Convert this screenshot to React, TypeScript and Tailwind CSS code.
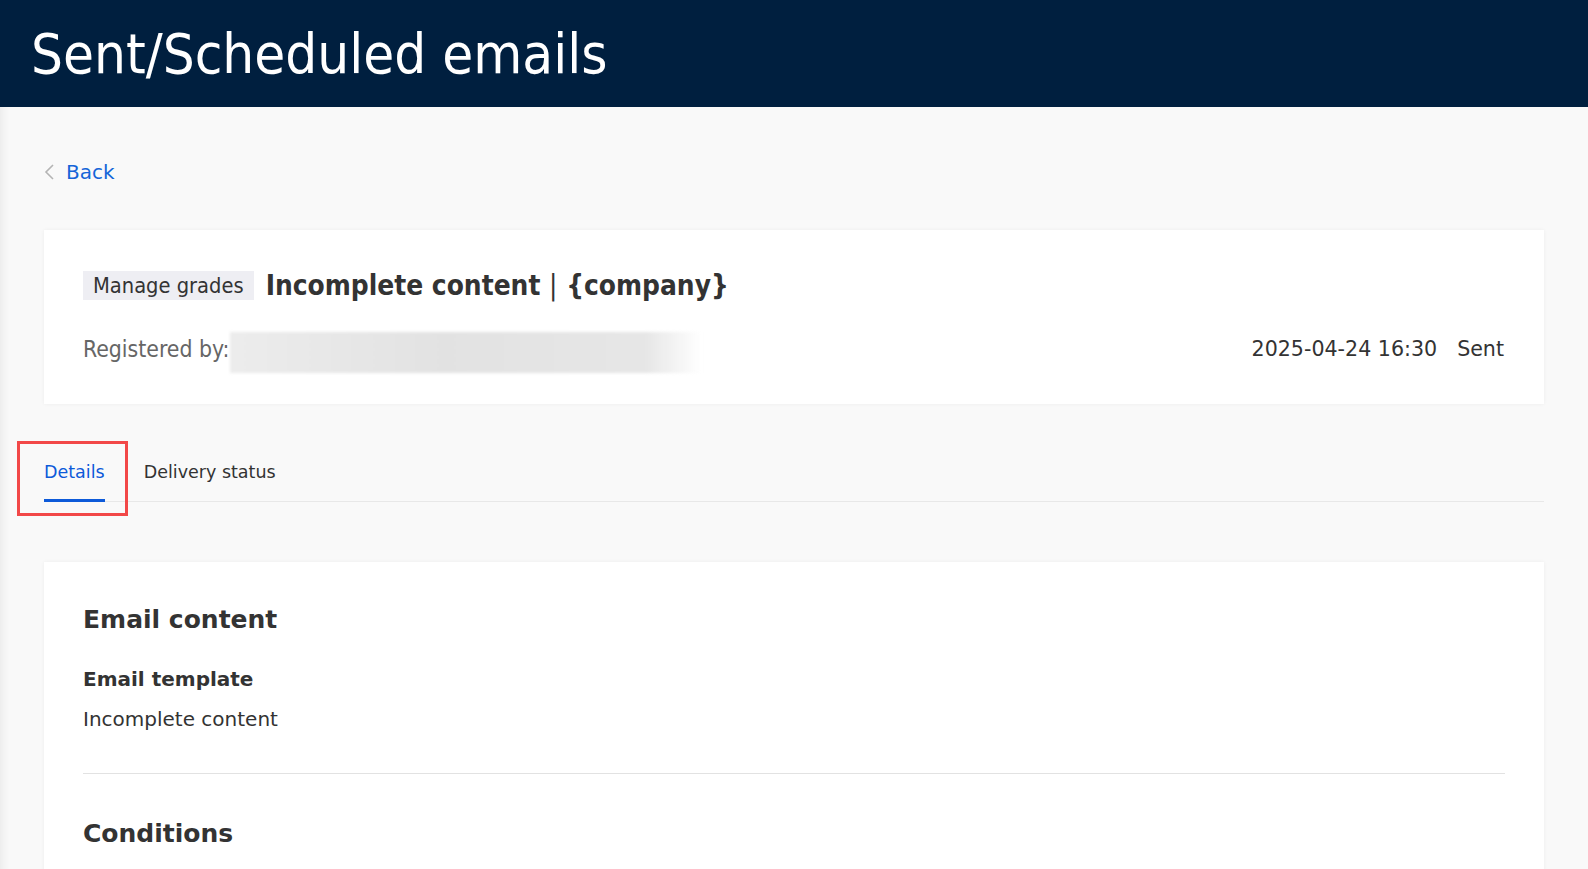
import React from "react";

const cond = { fontFamily: '"DejaVu Sans Condensed", "DejaVu Sans", sans-serif', fontStretch: "condensed" } as React.CSSProperties;

export default function App() {
  return (
    <div className="min-h-[869px] bg-[#f9f9f9] text-[#333] font-['DejaVu_Sans',sans-serif]">
      <header className="h-[107px] bg-[#001f3f] flex items-center pl-[31px]">
        <h1 style={cond} className="text-[56px] leading-none text-white font-normal">Sent/Scheduled emails</h1>
      </header>
      <main className="relative px-[44px] pt-[50px] shadow-[inset_10px_0_10px_-8px_rgba(0,0,0,0.07)] min-h-[762px]">
        <a className="flex items-center h-[30px] text-[20px] leading-[30px] text-[#1565d8] cursor-pointer">
          <svg width="12" height="18" viewBox="0 0 12 18" className="-ml-[1px] mr-[11px]">
            <path d="M10 2 L3 9 L10 16" fill="none" stroke="#b4b4b4" strokeWidth="1.6" />
          </svg>
          Back
        </a>

        <section className="mt-[43px] bg-white shadow-[0_0_4px_rgba(0,0,0,0.05)] pl-[39px] pr-[40px] pt-[41px] pb-[31px]">
          <div className="flex items-center h-[29px]">
            <span style={cond} className="h-[29px] px-[10px] bg-[#eeeef3] text-[21.7px] leading-[29px] text-[#333]">Manage grades</span>
            <span style={cond} className="ml-[12px] text-[27.8px] leading-[34px] font-bold text-[#333]">
              Incomplete content <span className="font-normal">|</span> {"{company}"}
            </span>
          </div>
          <div className="mt-[32px] flex items-center h-[41px]">
            <span style={cond} className="text-[22.8px] text-[#666] -mt-[6px]">Registered by:</span>
            <div className="ml-[1px] h-[41px] w-[472px] bg-[linear-gradient(90deg,#ececec_0%,#e2e2e2_45%,#e6e6e6_88%,rgba(236,236,236,0)_100%)] blur-[1.5px]" />
            <div className="ml-auto flex items-center text-[20.6px] text-[#333] -mt-[6px]">
              <span>2025-04-24 16:30</span>
              <span className="ml-[20px]">Sent</span>
            </div>
          </div>
        </section>

        <div className="relative mt-[37px] flex gap-[39px] border-b border-[#e8e8e8]">
          <div className="-mb-px pt-[18px] pb-[13px] border-b-[3px] border-[#0d5ad9] text-[17.5px] leading-[27px] text-[#0d5ad9]">Details</div>
          <div className="-mb-px pt-[18px] pb-[13px] border-b-[3px] border-transparent text-[17.5px] leading-[27px] text-[#333]">Delivery status</div>
          <div className="absolute left-[-27px] top-0 w-[111px] h-[75px] border-[3px] border-[#f24848] pointer-events-none" />
        </div>

        <section className="mt-[60px] bg-white shadow-[0_0_4px_rgba(0,0,0,0.05)] pl-[39px] pr-[39px] pt-[40px] pb-[40px]">
          <h2 className="text-[25px] leading-[36px] font-bold">Email content</h2>
          <h3 className="mt-[26px] text-[20px] leading-[30px] font-bold">Email template</h3>
          <p className="mt-[10px] text-[20px] leading-[30px]">Incomplete content</p>
          <div className="mt-[39px] h-px bg-[#e2e2e2]" />
          <h2 className="mt-[42px] text-[25px] leading-[36px] font-bold">Conditions</h2>
        </section>
      </main>
    </div>
  );
}
